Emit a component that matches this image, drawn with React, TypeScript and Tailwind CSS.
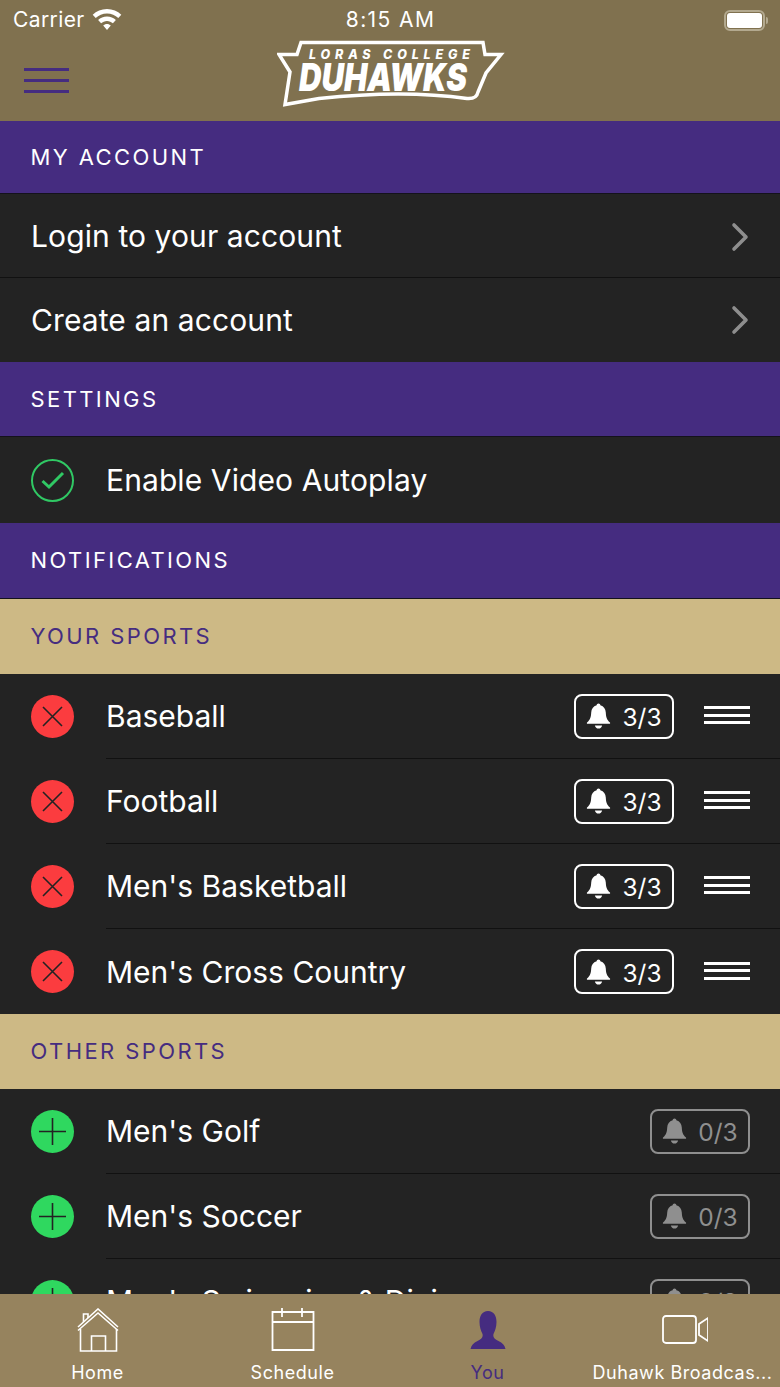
import { ChevronRight } from "lucide-react";

const YOUR_SPORTS = ["Baseball", "Football", "Men's Basketball", "Men's Cross Country"];
const OTHER_SPORTS = ["Men's Golf", "Men's Soccer", "Men's Swimming & Diving"];

function SectionHeader({ label, height }: { label: string; height: string }) {
	return (
		<div className={`flex shrink-0 items-center border-b border-[#14121c] bg-[#452c80] pl-[30.500px] text-[22px] tracking-[2.4px] text-white ${height}`}>
			{label}
		</div>
	);
}

function SubHeader({ label }: { label: string }) {
	return (
		<div className="flex h-[75px] shrink-0 items-center bg-[#cdb985] pl-[30.500px] text-[22px] tracking-[2.4px] text-[#452c80]">
			{label}
		</div>
	);
}

function LinkRow({ label, first }: { label: string; first?: boolean }) {
	return (
		<div className={`flex h-[84px] shrink-0 items-center justify-between bg-[#232323] pl-[31px] pr-[16px] text-[30px] tracking-[0.1px] text-white ${first ? "border-b border-[#111111] pt-[2px]" : ""}`}>
			<span>{label}</span>
			<ChevronRight className="h-[48px] w-[48px] text-[#8e8e8e]" strokeWidth={1.8} />
		</div>
	);
}

function BellIcon({ className }: { className: string }) {
	return (
		<svg viewBox="0 0 24 26" className={className} fill="currentColor">
			<path d="M12 1c1 0 1.700.7 1.800 1.700 3.300.8 5 3.600 5.200 7 .2 4 .8 7 4 9.500.5.5.2 1.300-.5 1.300H1.500c-.7 0-1-.8-.5-1.300 3.200-2.500 3.800-5.500 4-9.500.2-3.400 1.900-6.200 5.200-7C10.300 1.700 11 1 12 1z" />
			<path d="M8.500 22h7c-.4 1.800-1.800 3-3.500 3s-3.100-1.200-3.500-3z" />
		</svg>
	);
}

function AlertPill({ count, active }: { count: string; active: boolean }) {
	return (
		<div className={`flex h-[45px] w-[100px] shrink-0 items-center justify-center gap-[11px] rounded-[8px] border-2 text-[24.500px] ${active ? "border-white text-white" : "border-[#8f8f8f] text-[#8f8f8f]"}`}>
			<BellIcon className="h-[28px] w-[25px]" />
			<span className="pt-[3px]">{count}</span>
		</div>
	);
}

function Grip() {
	return (
		<div className="-mt-[2px] ml-[30px] flex w-[46px] shrink-0 flex-col gap-[4.500px]">
			<div className="h-[3px] bg-white" />
			<div className="h-[3px] bg-white" />
			<div className="h-[3px] bg-white" />
		</div>
	);
}

function RoundIcon({ kind }: { kind: "remove" | "add" }) {
	return (
		<div className={`flex h-[43px] w-[43px] shrink-0 items-center justify-center rounded-full ${kind === "remove" ? "bg-[#fb3c3f]" : "bg-[#2fd85f]"}`}>
			<svg viewBox="0 0 43 43" className="h-[43px] w-[43px]" stroke="#232323" strokeWidth="1.600" fill="none">
				{kind === "remove" ? <path d="M12 12l19 19M31 12L12 31" /> : <path d="M8 21.500h27M21.500 8v27" />}
			</svg>
		</div>
	);
}

function SportRow({ name, active, last }: { name: string; active: boolean; last?: boolean }) {
	return (
		<div className="flex h-[85px] shrink-0 items-center bg-[#232323] pl-[31px]">
			<RoundIcon kind={active ? "remove" : "add"} />
			<div className={`ml-[32px] flex h-full min-w-0 flex-1 items-center pr-[30px] ${last ? "" : "border-b border-[#111111]"}`}>
				<span className="flex-1 pt-[1px] text-[30px] text-white">{name}</span>
				<AlertPill count={active ? "3/3" : "0/3"} active={active} />
				{active && <Grip />}
			</div>
		</div>
	);
}

function WifiIcon() {
	return (
		<svg viewBox="0 0 30 22" className="h-[22px] w-[30px]" fill="white">
			<path d="M15 0C9.400 0 4.400 2.200.7 5.800l3 3.200C6.600 6.100 10.600 4.400 15 4.400s8.400 1.700 11.300 4.600l3-3.200C25.600 2.200 20.600 0 15 0z" />
			<path d="M15 7.500c-3.500 0-6.600 1.400-8.900 3.600l3 3.200c1.500-1.500 3.600-2.400 5.900-2.400s4.400.9 5.900 2.400l3-3.200C21.600 8.900 18.500 7.500 15 7.500z" />
			<path d="M15 15c-1.500 0-2.800.6-3.800 1.500L15 21l3.800-4.500c-1-.9-2.300-1.500-3.800-1.500z" />
		</svg>
	);
}

function Battery() {
	return (
		<div className="flex items-center gap-[1px]">
			<div className="flex h-[21px] w-[41px] items-center rounded-[6px] border-2 border-[#b3a98f] p-[1px]">
				<div className="h-full w-full rounded-[3px] bg-white" />
			</div>
			<div className="h-[7px] w-[2px] rounded-r-sm bg-[#b3a98f]" />
		</div>
	);
}

function Logo() {
	return (
		<svg viewBox="0 0 230 70" className="mt-[1px] h-[70px] w-[230px]" fill="none">
			<path
				d="M22 3.500H204L206 15.500H222L207 34L199 53C198 58 194 60 188 59.500C150 54 100 53 40 59.500L6 65.500L11 33L0 15.500H18z"
				stroke="white"
				strokeWidth="3.500"
				transform="translate(2 0)"
			/>
			<text x="32" y="20" fontSize="12.500" fontWeight="800" fontStyle="italic" fill="white" textLength="161" fontFamily="Inter, sans-serif">
				LORAS COLLEGE
			</text>
			<text x="22" y="52" fontSize="38.500" fontWeight="900" fontStyle="italic" fill="white" textLength="168" lengthAdjust="spacingAndGlyphs" fontFamily="Inter, sans-serif">
				DUHAWKS
			</text>
		</svg>
	);
}

function TabIcon({ name }: { name: string }) {
	if (name === "home") {
		return (
			<svg viewBox="0 0 44 44" className="h-[44px] w-[44px]" fill="none" stroke="white" strokeWidth="1.600">
				<path d="M2 19L22 1 42 19M2 22.500L22 5 42 22.500" />
				<path d="M4.500 21v22h36V21M15.500 43V28h14v15" />
				<path d="M7.500 14V6H12v4" />
			</svg>
		);
	}
	if (name === "schedule") {
		return (
			<svg viewBox="0 0 44 44" className="h-[44px] w-[44px]" fill="none" stroke="white" strokeWidth="1.800">
				<path d="M1.500 4h41v38h-41zM1.500 14h41M11 0v9M31 0v9" />
			</svg>
		);
	}
	if (name === "you") {
		return (
			<svg viewBox="0 0 36 38" className="h-[38px] w-[36px]" fill="#452c80">
				<path d="M18 0c6 0 8.500 5 8.500 11 0 5-1.500 9-3 12-.8 3 1 5 5 7 4 2 6 4 7 8H.5c1-4 3-6 7-8 4-2 5.800-4 5-7-1.500-3-3-7-3-12C9.500 5 12 0 18 0z" />
			</svg>
		);
	}
	return (
		<svg viewBox="0 0 46 30" className="ml-[4px] h-[30px] w-[46px]" fill="none" stroke="white" strokeWidth="1.800">
			<rect x="1" y="1" width="33" height="27" rx="3" />
			<path d="M46 3v23l-9-6V9z" />
		</svg>
	);
}

function Tab({ icon, label, active }: { icon: string; label: string; active?: boolean }) {
	return (
		<div className="flex flex-col items-center">
			<div className="flex h-[44px] items-center justify-center">
				<TabIcon name={icon} />
			</div>
			<span className={`mt-[9px] whitespace-nowrap text-[18px] leading-[24px] tracking-[0.55px] ${active ? "text-[#452c80]" : "text-white"}`}>{label}</span>
		</div>
	);
}

export default function App() {
	return (
		<div className="flex h-[1387px] w-[780px] flex-col overflow-hidden bg-[#232323] font-['Inter',sans-serif]">
			<header className="h-[121px] shrink-0 bg-[#80714f]">
				<div className="grid h-[38px] grid-cols-3 items-center pl-[13px] pr-[12px] pt-[2px] text-[21px] text-white">
					<div className="flex items-center gap-[7px] tracking-[0.4px]">
						<span>Carrier</span>
						<WifiIcon />
					</div>
					<div className="text-center tracking-[1.400px]">8:15 AM</div>
					<div className="flex justify-end">
						<Battery />
					</div>
				</div>
				<div className="grid grid-cols-[1fr_auto_1fr] items-center pl-[24px]">
					<div className="flex w-[45px] flex-col gap-[8px] pt-[13px]">
						<div className="h-[3px] bg-[#452c80]" />
						<div className="h-[3px] bg-[#452c80]" />
						<div className="h-[3px] bg-[#452c80]" />
					</div>
					<div className="-ml-[20px]">
						<Logo />
					</div>
				</div>
			</header>
			<main className="min-h-0 flex-1 overflow-hidden">
				<SectionHeader label="MY ACCOUNT" height="h-[73px]" />
				<LinkRow label="Login to your account" first />
				<LinkRow label="Create an account" />
				<SectionHeader label="SETTINGS" height="h-[75px]" />
				<div className="flex h-[86px] shrink-0 items-center bg-[#232323] pl-[31px] text-[30px] tracking-[0.1px] text-white">
					<svg viewBox="0 0 43 43" className="h-[43px] w-[43px]" fill="none" stroke="#30c864">
						<circle cx="21.500" cy="21.500" r="20.500" strokeWidth="2" />
						<path d="M11.500 22l6.500 6L32 14" strokeWidth="3" />
					</svg>
					<span className="ml-[32px]">Enable Video Autoplay</span>
				</div>
				<SectionHeader label="NOTIFICATIONS" height="h-[76px]" />
				<SubHeader label="YOUR SPORTS" />
				{YOUR_SPORTS.map((name, i) => (
					<SportRow key={name} name={name} active last={i === YOUR_SPORTS.length - 1} />
				))}
				<SubHeader label="OTHER SPORTS" />
				{OTHER_SPORTS.map((name) => (
					<SportRow key={name} name={name} active={false} />
				))}
			</main>
			<nav className="grid h-[93px] shrink-0 grid-cols-4 bg-[#96835e] pt-[14px]">
				<Tab icon="home" label="Home" />
				<Tab icon="schedule" label="Schedule" />
				<Tab icon="you" label="You" active />
				<Tab icon="video" label="Duhawk Broadcas..." />
			</nav>
		</div>
	);
}
